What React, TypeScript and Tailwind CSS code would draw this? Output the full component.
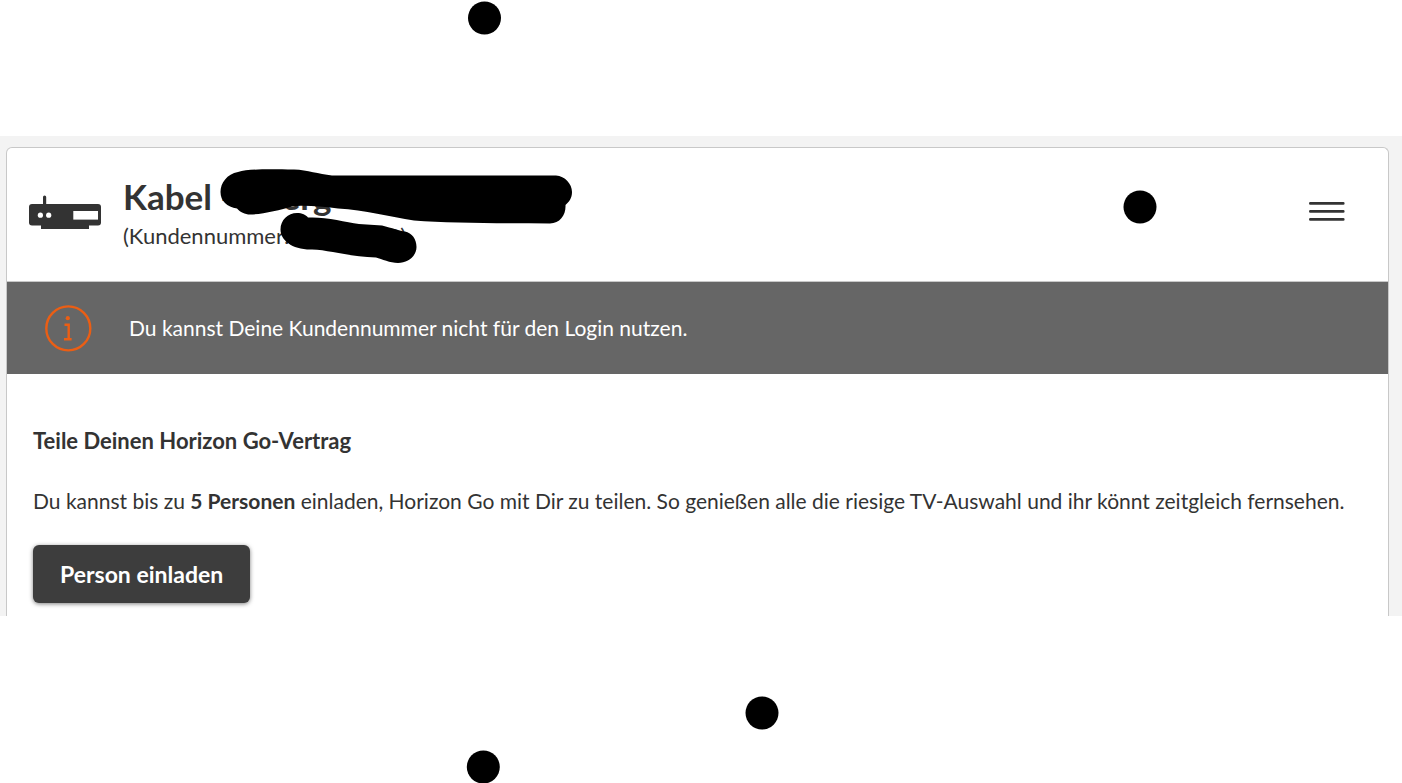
import React from 'react';

const dots = [
  { cx: 484.5, cy: 18 },
  { cx: 1140, cy: 207 },
  { cx: 762, cy: 713 },
  { cx: 483.3, cy: 767 },
];

const ReceiverIcon: React.FC = () => (
  <svg width="72" height="34" viewBox="0 0 72 34" fill="#333333" className="shrink-0" aria-hidden="true">
    <path d="M14 2a1.6 1.6 0 0 1 3.2 0v10H14z" />
    <rect x="0" y="9" width="72" height="21.5" rx="3" />
    <rect x="12" y="28" width="48" height="6" />
    <circle cx="11.4" cy="20.2" r="2.6" fill="#fff" />
    <circle cx="19.7" cy="20.2" r="2.6" fill="#fff" />
    <rect x="44.3" y="16" width="24.7" height="8.6" fill="#fff" />
  </svg>
);

const InfoIcon: React.FC = () => (
  <svg width="48" height="48" viewBox="0 0 48 48" fill="none" stroke="#eb5e14" className="shrink-0" aria-hidden="true">
    <circle cx="24.3" cy="24.4" r="22" strokeWidth="2.4" />
    <circle cx="23.8" cy="14.2" r="2.1" fill="#eb5e14" stroke="none" />
    <path d="M20.5 20.8H24.7V35M20 35.2h7.6" strokeWidth="2.4" />
  </svg>
);

const MenuIcon: React.FC = () => (
  <svg width="36" height="20" viewBox="0 0 36 20" stroke="#333333" strokeWidth="2.6" strokeLinecap="round" aria-hidden="true">
    <path d="M1.3 1.4h33M1.3 9.4h33M1.3 17.4h33" />
  </svg>
);

// Freehand marker that blacks out the private details
const Redactions: React.FC = () => (
  <svg width="1402" height="783" viewBox="0 0 1402 783" className="absolute top-0 left-0 pointer-events-none" aria-hidden="true">
    <path d="M238 172C248 169 265 169 294 169.5C308 170 318 174 332 175.5H556C565 176 572 184 572 192C572 198 569 202 565.5 205C566 215 560 223 550 223.5C500 223.5 450 223 414 220.5C390 217 365 210 338 208.5C318 206 303 205 292 206.5C280 210 262 214.5 250 214.5C245 214.5 240 212 237 208.5C227 207 220.5 201 220.5 192C220.5 183 227 174 238 172Z" />
    <path d="M297 213C302 213 306 215 308 217.5C325 216.5 345 222 359 224L382 225.5C392 228 400 231 405 231.5C412 233 416.5 239 416.5 247C416.5 256 408 263 398 263C390 263 382 259 376 257.5C350 257 330 250 312 249.5C292 250 280.5 240 280.5 229.5C280.5 220 288 213 297 213Z" />
    {dots.map((dot, idx) => (
      <circle key={idx} cx={dot.cx} cy={dot.cy} r="16.5" />
    ))}
  </svg>
);

export default function App() {
  return (
    <div className="relative min-h-screen overflow-hidden bg-white pt-[136px] font-[Lato,sans-serif] text-[#333333]">
      <main className="bg-[#f3f3f3] pt-[11px] pr-[13px] pl-[6px]">
        <section className="rounded-t-md border border-b-0 border-[#c8c8c8] bg-white pb-[13px]">
          <header className="flex items-center border-b border-[#c8c8c8] pt-6 pb-[29px] pr-[43px] pl-[22px]">
            <ReceiverIcon />
            <div className="ml-[22px] grow">
              <h1 className="text-[35px] leading-[48px] font-bold">
                Kabel -<span className="ml-12">erg</span>
              </h1>
              <p className="text-[22px] leading-8">
                (Kundennummer:<span className="ml-[98px]">0)</span>
              </p>
            </div>
            <button type="button" aria-label="Menü">
              <MenuIcon />
            </button>
          </header>

          <div className="flex items-center bg-[#666666] py-[22px] pl-[37px] text-white">
            <InfoIcon />
            <p className="ml-[37px] text-[21px] leading-8">Du kannst Deine Kundennummer nicht für den Login nutzen.</p>
          </div>

          <div className="px-[26px] pt-[51px]">
            <h2 className="text-[22px] leading-8 font-bold">Teile Deinen Horizon Go-Vertrag</h2>
            <p className="mt-7 text-[21px] leading-8">
              Du kannst bis zu <strong>5 Personen</strong> einladen, Horizon Go mit Dir zu teilen. So genießen alle die riesige TV-Auswahl und ihr könnt zeitgleich fernsehen.
            </p>
            <button type="button" className="mt-7 h-[58px] rounded-md bg-[#3d3d3d] px-[27px] text-[23px] font-bold text-white shadow-[0_1px_4px_rgba(0,0,0,0.5)]">
              Person einladen
            </button>
          </div>
        </section>
      </main>
      <Redactions />
    </div>
  );
}
